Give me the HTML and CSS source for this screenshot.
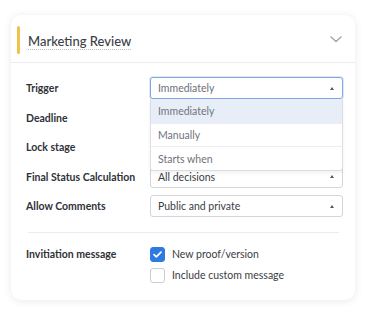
FILE: index.html
```html
<!DOCTYPE html>
<html lang="en">

<head>
    <meta charset="UTF-8">
    <title>Marketing Review</title>
    <link rel="stylesheet" href="styles.css">
</head>

<body>
    <div class="card">
        <div class="card-head">
            <span class="accent"></span>
            <span class="title">Marketing Review</span>
            <svg class="chevron" width="12" height="7" viewBox="0 0 12 7">
                <path d="M1 1l5 4.5L11 1" fill="none" stroke="#a3a9b3" stroke-width="1.6" stroke-linecap="round" stroke-linejoin="round"/>
            </svg>
        </div>
        <div class="card-body">
            <div class="rows">
                <div class="row">
                    <div class="label">Trigger</div>
                    <div class="field">
                        <div class="select open">Immediately<span class="caret"></span></div>
                        <ul class="menu">
                            <li class="active">Immediately</li>
                            <li>Manually</li>
                            <li>Starts when</li>
                        </ul>
                    </div>
                </div>
                <div class="row">
                    <div class="label">Deadline</div>
                    <div class="field">
                        <div class="select"><span class="caret"></span></div>
                    </div>
                </div>
                <div class="row">
                    <div class="label">Lock stage</div>
                    <div class="field">
                        <div class="select"><span class="caret"></span></div>
                    </div>
                </div>
                <div class="row">
                    <div class="label">Final Status Calculation</div>
                    <div class="field">
                        <div class="select">All decisions<span class="caret"></span></div>
                    </div>
                </div>
                <div class="row">
                    <div class="label">Allow Comments</div>
                    <div class="field">
                        <div class="select">Public and private<span class="caret"></span></div>
                    </div>
                </div>
            </div>
            <hr class="divider">
            <div class="row row-top">
                <div class="label">Invitiation message</div>
                <div class="checks">
                    <label class="check">
                        <span class="box checked">
                            <svg width="9" height="7" viewBox="0 0 9 7">
                                <path d="M1 3.6l2.3 2.2L8 1.2" fill="none" stroke="#fff" stroke-width="1.7" stroke-linecap="round" stroke-linejoin="round"/>
                            </svg>
                        </span>
                        New proof/version
                    </label>
                    <label class="check">
                        <span class="box"></span>
                        Include custom message
                    </label>
                </div>
            </div>
        </div>
    </div>
</body>

</html>
```

FILE: styles.css
```css
* {
    margin: 0;
    padding: 0;
    box-sizing: border-box;
}

ul {
    list-style: none;
}

body {
    background: #fff;
    padding: 15px 17px 16px 11px;
    font-family: Lato, "Open Sans", sans-serif;
    color: #2f3238;
}

.card {
    width: 344px;
    height: 285px;
    background: #fff;
    border-radius: 10px;
    box-shadow: 0 1px 8px rgba(0, 0, 0, .09);
}

.card-head {
    height: 48px;
    display: flex;
    align-items: center;
    padding: 2px 13px 0 6px;
    border-bottom: 1px solid #ececef;
}

.accent {
    width: 3px;
    height: 28px;
    border-radius: 2px;
    background: #f0c24d;
    margin-right: 8px;
}

.title {
    font-size: 13px;
    font-weight: 500;
    color: #3d4048;
    border-bottom: 1px dotted #b9bcc2;
    line-height: 16px;
    margin-top: 3px;
}

.chevron {
    margin-left: auto;
}

.card-body {
    padding: 14px 12px 0 15px;
}

.rows {
    display: flex;
    flex-direction: column;
    gap: 7.5px;
}

.row {
    display: flex;
    align-items: center;
}

.row-top {
    align-items: flex-start;
}

.label {
    width: 124px;
    font-size: 10.5px;
    font-weight: 700;
    color: #2f3238;
}

.row-top .label {
    line-height: 15px;
}

.field {
    flex: 1;
    position: relative;
}

.select {
    height: 22px;
    border: 1px solid #d3d5da;
    border-radius: 3px;
    display: flex;
    align-items: center;
    padding: 0 8px 0 7px;
    font-size: 10.5px;
    color: #3a3d44;
    background: #fff;
}

.select.open {
    border-color: #7ea7e3;
    color: #6d7078;
    box-shadow: 0 0 0 1px rgba(126, 167, 227, .25);
}

.caret {
    margin-left: auto;
    width: 0;
    height: 0;
    border-left: 2.5px solid transparent;
    border-right: 2.5px solid transparent;
    border-bottom: 3px solid #55585f;
}

.menu {
    position: absolute;
    left: 0;
    right: 0;
    top: 22px;
    background: #fff;
    border: 1px solid #dcdee2;
    border-top: none;
    border-radius: 0 0 3px 3px;
    box-shadow: 0 2px 4px rgba(0, 0, 0, .06);
    z-index: 2;
}

.menu li {
    height: 23.5px;
    display: flex;
    align-items: center;
    padding: 1px 0 0 7px;
    font-size: 10.5px;
    color: #6f727a;
    border-top: 1px solid #eceef1;
}

.menu li:first-child {
    border-top: none;
}

.menu li.active {
    background: #e8eef8;
    color: #70747c;
}

.divider {
    border: none;
    border-top: 1px solid #ececef;
    margin: 15px 4px 14px 2px;
}

.checks {
    display: flex;
    flex-direction: column;
    gap: 6px;
}

.check {
    display: flex;
    align-items: center;
    gap: 7px;
    font-size: 10.5px;
    color: #3a3d44;
    line-height: 15px;
}

.box {
    width: 15px;
    height: 15px;
    border: 1px solid #c9ccd2;
    border-radius: 3px;
    display: flex;
    align-items: center;
    justify-content: center;
}

.box.checked {
    background: #2f7ae0;
    border-color: #2f7ae0;
}
```
